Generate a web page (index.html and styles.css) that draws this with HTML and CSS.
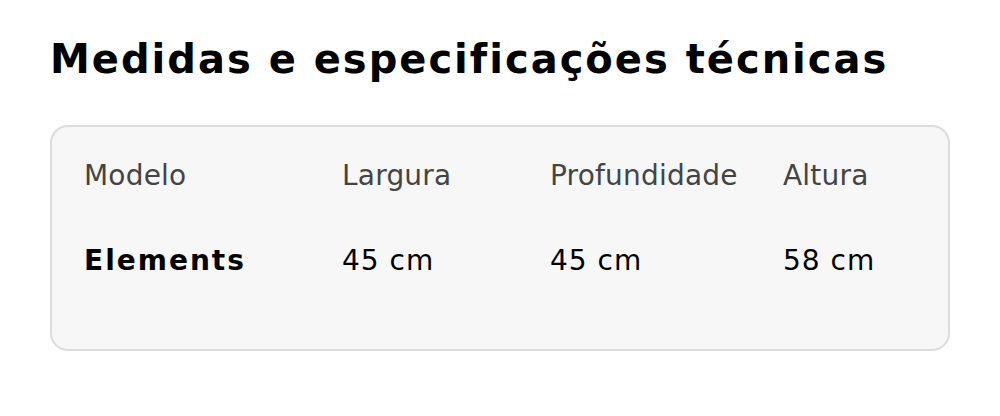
FILE: index.html
```html
<!DOCTYPE html>
<html lang="pt">
<head>
<meta charset="utf-8">
<title>Medidas e especificações técnicas</title>
<link rel="stylesheet" href="styles.css">
</head>
<body>
<main class="page">
  <h1 class="title">Medidas e especificações técnicas</h1>
  <section class="card">
    <div class="specs">
      <div class="head">Modelo</div>
      <div class="head">Largura</div>
      <div class="head">Profundidade</div>
      <div class="head">Altura</div>
      <div class="val model">Elements</div>
      <div class="val">45 cm</div>
      <div class="val">45 cm</div>
      <div class="val">58 cm</div>
    </div>
  </section>
</main>
</body>
</html>
```
FILE: styles.css
```css
html, body {
  margin: 0;
  padding: 0;
  background: #ffffff;
}
body {
  font-family: "DejaVu Sans", sans-serif;
  color: #000;
}
.page {
  padding: 36px 50px 0 50px;
}
.title {
  margin: 0 0 43px 0;
  font-size: 40px;
  font-weight: bold;
  line-height: normal;
  letter-spacing: 2px;
}
.card {
  width: 900px;
  box-sizing: border-box;
  border: 2px solid #dcdcdc;
  border-radius: 18px;
  background: #f7f7f7;
  padding: 32px 32px 72px 32px;
}
.specs {
  display: grid;
  grid-template-columns: 258px 208px 233px 1fr;
  row-gap: 52px;
  font-size: 28px;
  line-height: normal;
}
.head {
  color: #444444;
  letter-spacing: 0.2px;
}
.val {
  color: #000;
  letter-spacing: 1px;
}
.model {
  font-weight: bold;
  letter-spacing: 2px;
}
```
